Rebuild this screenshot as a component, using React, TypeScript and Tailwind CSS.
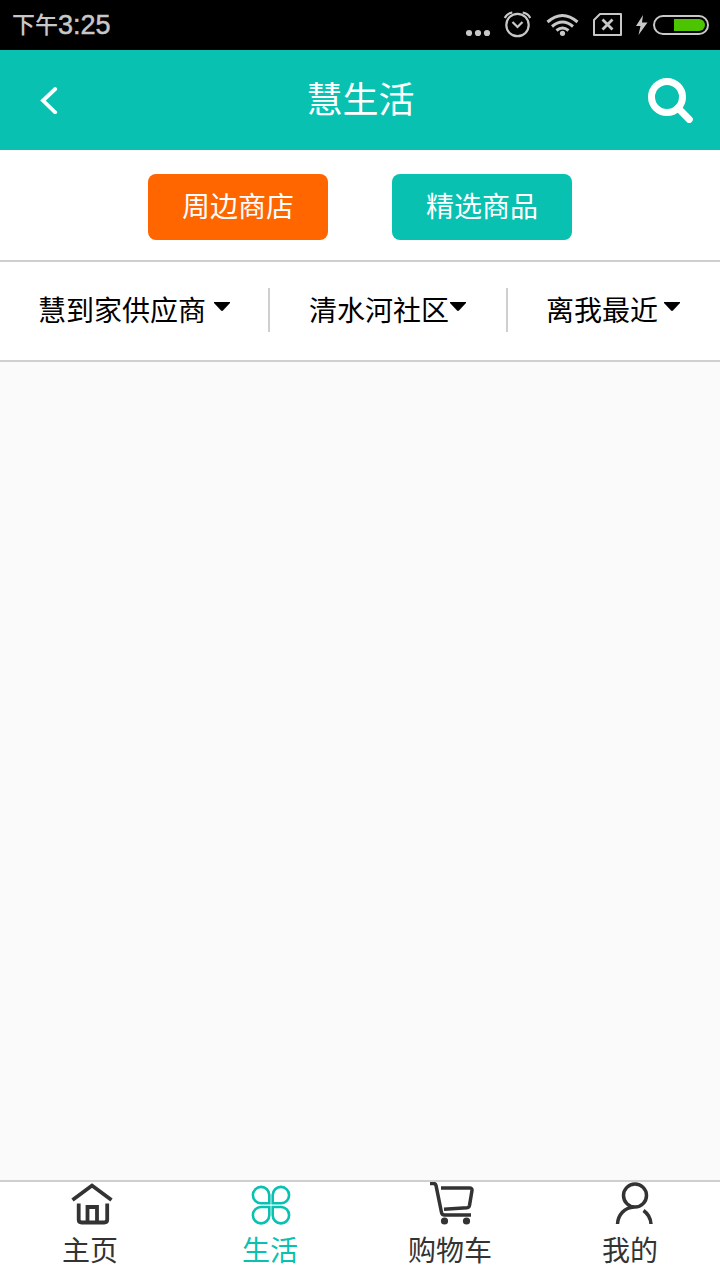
import { useState } from "react";

const StatusBar = () => {
  return (
    <div className="flex h-[50px] items-center justify-between bg-black pl-3 pr-[11px] text-[#c8c8c8]">
      <div className="flex items-start font-medium">
        <span className="text-[23px] leading-[47px]">下午</span>
        <span className="font-['Liberation_Sans'] text-[27px] leading-[51px] [-webkit-text-stroke:0.5px_#c8c8c8]">3:25</span>
      </div>
      <div className="flex h-[50px] items-center">
        <svg width="25" height="50" viewBox="466 0 25 50" fill="currentColor">
          <circle cx="469" cy="33" r="3.1" />
          <circle cx="478" cy="33" r="3.1" />
          <circle cx="487" cy="33" r="3.1" />
        </svg>
        <svg className="ml-3" width="29" height="50" viewBox="503 0 29 50" fill="none" stroke="currentColor" strokeWidth="2.2">
          <circle cx="517.5" cy="25" r="11.2" />
          <path d="M512.5 22l5 5 5-5" />
          <path d="M504.800 18q2-4.500 7.500-5.500M530.200 18q-2-4.500-7.500-5.500" />
        </svg>
        <svg className="ml-3.5" width="34" height="50" viewBox="546 0 34 50" fill="none" stroke="currentColor" strokeWidth="3">
          <path d="M547.500 22q15-13 30 0M552 26.500q10.500-9 21 0M556.500 30.500q6-5 12 0" />
          <circle cx="562.5" cy="33.300" r="2.600" fill="currentColor" stroke="none" />
        </svg>
        <svg className="ml-3" width="31" height="50" viewBox="592 0 31 50" fill="none" stroke="currentColor" strokeWidth="2">
          <path d="M600 14h21v21h-27V20z" strokeLinejoin="round" />
          <path d="M602.500 19.500l10 10M612.500 19.500l-10 10" strokeWidth="2.800" />
        </svg>
        <svg className="ml-3" width="13" height="50" viewBox="635 0 13 50" fill="currentColor">
          <path d="M643 15l-7 11h4.500l-2 9 9-12.500H642z" />
        </svg>
        <svg className="ml-[5px]" width="56" height="50" viewBox="653 0 56 50" fill="none">
          <rect x="654" y="16" width="54" height="18" rx="9" stroke="currentColor" strokeWidth="2" />
          <path d="M674 19h25a6 6 0 0 1 0 12h-25z" fill="#4cc400" />
        </svg>
      </div>
    </div>
  )
}

const Header = () => {
  return (
    <div className="flex h-[100px] items-center justify-between bg-[#08c1b1] pl-10 pr-[27px] text-white">
      <svg width="20" height="28" viewBox="40 86 20 28" fill="none" stroke="currentColor" strokeWidth="3.8" strokeLinecap="round" strokeLinejoin="miter">
        <path d="M55.200 89L43 100.500l12.200 11.800" />
      </svg>
      <h1 className="ml-3.5 h-[100px] text-[36px] leading-[95px]">慧生活</h1>
      <svg width="46" height="46" viewBox="647 77 46 46" fill="none" stroke="currentColor">
        <circle cx="667" cy="97" r="15.500" strokeWidth="7" />
        <path d="M678 108l11.300 11.500" strokeWidth="7" strokeLinecap="round" />
      </svg>
    </div>
  )
}

const Caret = () => {
  return (
    <svg width="16" height="10" viewBox="0 0 16 10" fill="currentColor">
      <path d="M0 0h16v1L9 8.600q-1 .900-2 0L0 1z" />
    </svg>
  )
}

const HomeIcon = () => {
  return (
    <svg width="44" height="44" viewBox="70 1182 44 44" fill="none" stroke="currentColor" strokeWidth="3.8">
      <path d="M72.500 1200L92 1185.500l19.500 14.500" />
      <path d="M78.700 1203.500v16q0 3 3 3h22.500q3 0 3-3v-16" />
      <path d="M87.500 1222v-15h9.500v15" />
    </svg>
  )
}

const LifeIcon = () => {
  return (
    <svg width="44" height="44" viewBox="249 1182 44 44" fill="none" stroke="currentColor" strokeWidth="2.6">
      <path d="M269.300 1203.300h-8.300a8.200 8.200 0 1 1 8.300-8.300z" />
      <path d="M272.700 1203.300h8.300a8.200 8.200 0 1 0-8.300-8.300z" />
      <path d="M269.300 1207h-8.300a8.200 8.200 0 1 0 8.300 8.300z" />
      <path d="M272.700 1207h8.300a8.200 8.200 0 1 1-8.300 8.300z" />
    </svg>
  )
}

const CartIcon = () => {
  return (
    <svg width="46" height="44" viewBox="429 1182 46 44" fill="none" stroke="currentColor" strokeWidth="3.5">
      <path d="M430 1183.500h3.500q2 0 2.500 2l5.500 27q.5 2.500 3 2.500h26.500" />
      <path d="M441 1188h28.500q3 0 2.500 2.500l-2.500 15q-.4 2-2.500 2.200l-23 1.500" />
      <circle cx="444.500" cy="1221" r="3.600" fill="currentColor" stroke="none" />
      <circle cx="466.500" cy="1221" r="3.600" fill="currentColor" stroke="none" />
    </svg>
  )
}

const MineIcon = () => {
  return (
    <svg width="44" height="44" viewBox="612 1182 44 44" fill="none" stroke="currentColor" strokeWidth="3.5">
      <circle cx="635" cy="1195.500" r="11.500" />
      <path d="M617.500 1224c.5-9 7-16.500 16.500-17" />
      <path d="M643.500 1210.500q7 5 7.500 13.500" />
    </svg>
  )
}

const tabs = [
  { name: "主页", icon: <HomeIcon />, shift: "pl-1" },
  { name: "生活", icon: <LifeIcon />, shift: "pl-0.5" },
  { name: "购物车", icon: <CartIcon />, shift: "pl-1" },
  { name: "我的", icon: <MineIcon />, shift: "pl-2" },
];

const App = () => {
  const [active, setActive] = useState(1);

  return (
    <div className="flex h-[1280px] w-[720px] flex-col bg-[#fafafa] font-['Noto_Sans_CJK_SC',sans-serif]">
      <StatusBar />
      <Header />
      <div className="flex h-28 justify-center gap-16 border-b-2 border-[#cfcfcf] bg-white pt-6 text-[28px] leading-[62px] text-white">
        <button className="h-[66px] w-[180px] rounded-lg bg-[#ff6600] pb-1">周边商店</button>
        <button className="h-[66px] w-[180px] rounded-lg bg-[#08c1b1] pb-1">精选商品</button>
      </div>
      <div className="flex h-[100px] border-b-2 border-[#cfcfcf] bg-white pt-[26px] text-[28px] leading-[42px] text-black">
        <div className="flex h-11 w-[270px] gap-2 border-r-2 border-[#cfcfcf] pl-[38px]">
          <span>慧到家供应商</span>
          <div className="pt-3.5"><Caret /></div>
        </div>
        <div className="flex h-11 w-[238px] border-r-2 border-[#cfcfcf] pl-[39px]">
          <span className="w-[141px]">清水河社区</span>
          <div className="pt-3.5"><Caret /></div>
        </div>
        <div className="flex h-11 gap-1.5 pl-[38px]">
          <span>离我最近</span>
          <div className="pt-3.5"><Caret /></div>
        </div>
      </div>
      <div className="flex-1"></div>
      <div className="grid h-[100px] grid-cols-4 border-t-2 border-[#cfcfcf] bg-white">
        {tabs.map((tab, i) => (
          <button key={tab.name} onClick={() => setActive(i)} className={`flex flex-col items-center justify-start ${active === i ? "text-[#08c1b1]" : "text-[#333]"}`}>
            <div className={tab.shift}>{tab.icon}</div>
            <span className="text-[28px] leading-[46px]">{tab.name}</span>
          </button>
        ))}
      </div>
    </div>
  )
}

export default App
